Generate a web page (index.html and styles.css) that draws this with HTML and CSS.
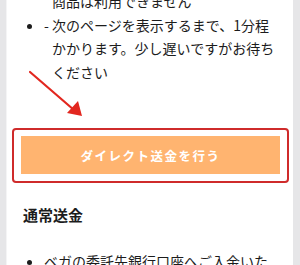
FILE: index.html
```html
<!DOCTYPE html>
<html lang="ja">
<head>
<meta charset="utf-8">
<link rel="stylesheet" href="styles.css">
</head>
<body>
<div class="page">
  <div class="card">
    <ul class="list list-top">
      <li class="plain">商品は利用できません</li>
      <li class="dash">- 次のページを表示するまで、1分程かかります。少し遅いですがお待ちください</li>
    </ul>
    <div class="highlight">
      <button class="btn">ダイレクト送金を行う</button>
    </div>
    <h2 class="heading">通常送金</h2>
    <ul class="list list-bottom">
      <li>ベガの委託先銀行口座へご入金いただくことで送金できます</li>
    </ul>
    <svg class="arrow" width="100" height="60" viewBox="0 0 100 60">
      <line x1="2" y1="2" x2="46" y2="40" stroke="#e2271f" stroke-width="2.2" stroke-linecap="round"/>
      <polygon points="54,46 39,43 50,31" fill="#e2271f"/>
    </svg>
  </div>
</div>
</body>
</html>
```
FILE: styles.css
```css
html, body {
  margin: 0;
  padding: 0;
}
body {
  width: 300px;
  height: 265px;
  overflow: hidden;
  background: #e6e6e8;
  font-family: "Noto Sans CJK JP", "Noto Sans", sans-serif;
  color: #1c1c1c;
}
.page {
  padding: 0 7px 0 6px;
  height: 265px;
}
.card {
  position: relative;
  background: #ffffff;
  height: 100%;
  padding: 0 16px;
  box-sizing: border-box;
  border-left: 1px solid #f4f4f5;
  overflow: hidden;
}
.list {
  margin: 0;
  padding-left: 21px;
  font-size: 14px;
  line-height: 23.5px;
  letter-spacing: 0;
}
.list-top {
  margin-top: -10px;
}
.list-top .plain {
  list-style: none;
  padding-left: 8px;
}
.list-top .dash {
  padding-left: 8px;
  text-indent: -8px;
}
.highlight {
  margin: 44px 0 0 -11px;
  width: 277px;
  box-sizing: border-box;
  border: 2px solid #cf2b2b;
  border-radius: 4px;
  padding: 6px 7px 7px 7px;
}
.btn {
  display: block;
  width: 100%;
  height: 38px;
  border: none;
  border-radius: 0;
  background: #ffb470;
  color: #ffffff;
  font-family: "Noto Sans CJK JP", "Noto Sans", sans-serif;
  font-size: 12.5px;
  font-weight: 700;
  letter-spacing: 1.5px;
  padding: 0;
}
.heading {
  margin: 22px 0 0 0;
  font-size: 15px;
  font-weight: 700;
  line-height: 20px;
}
.list-bottom {
  margin-top: 25px;
}
.arrow {
  position: absolute;
  left: 21px;
  top: 70px;
}
```
